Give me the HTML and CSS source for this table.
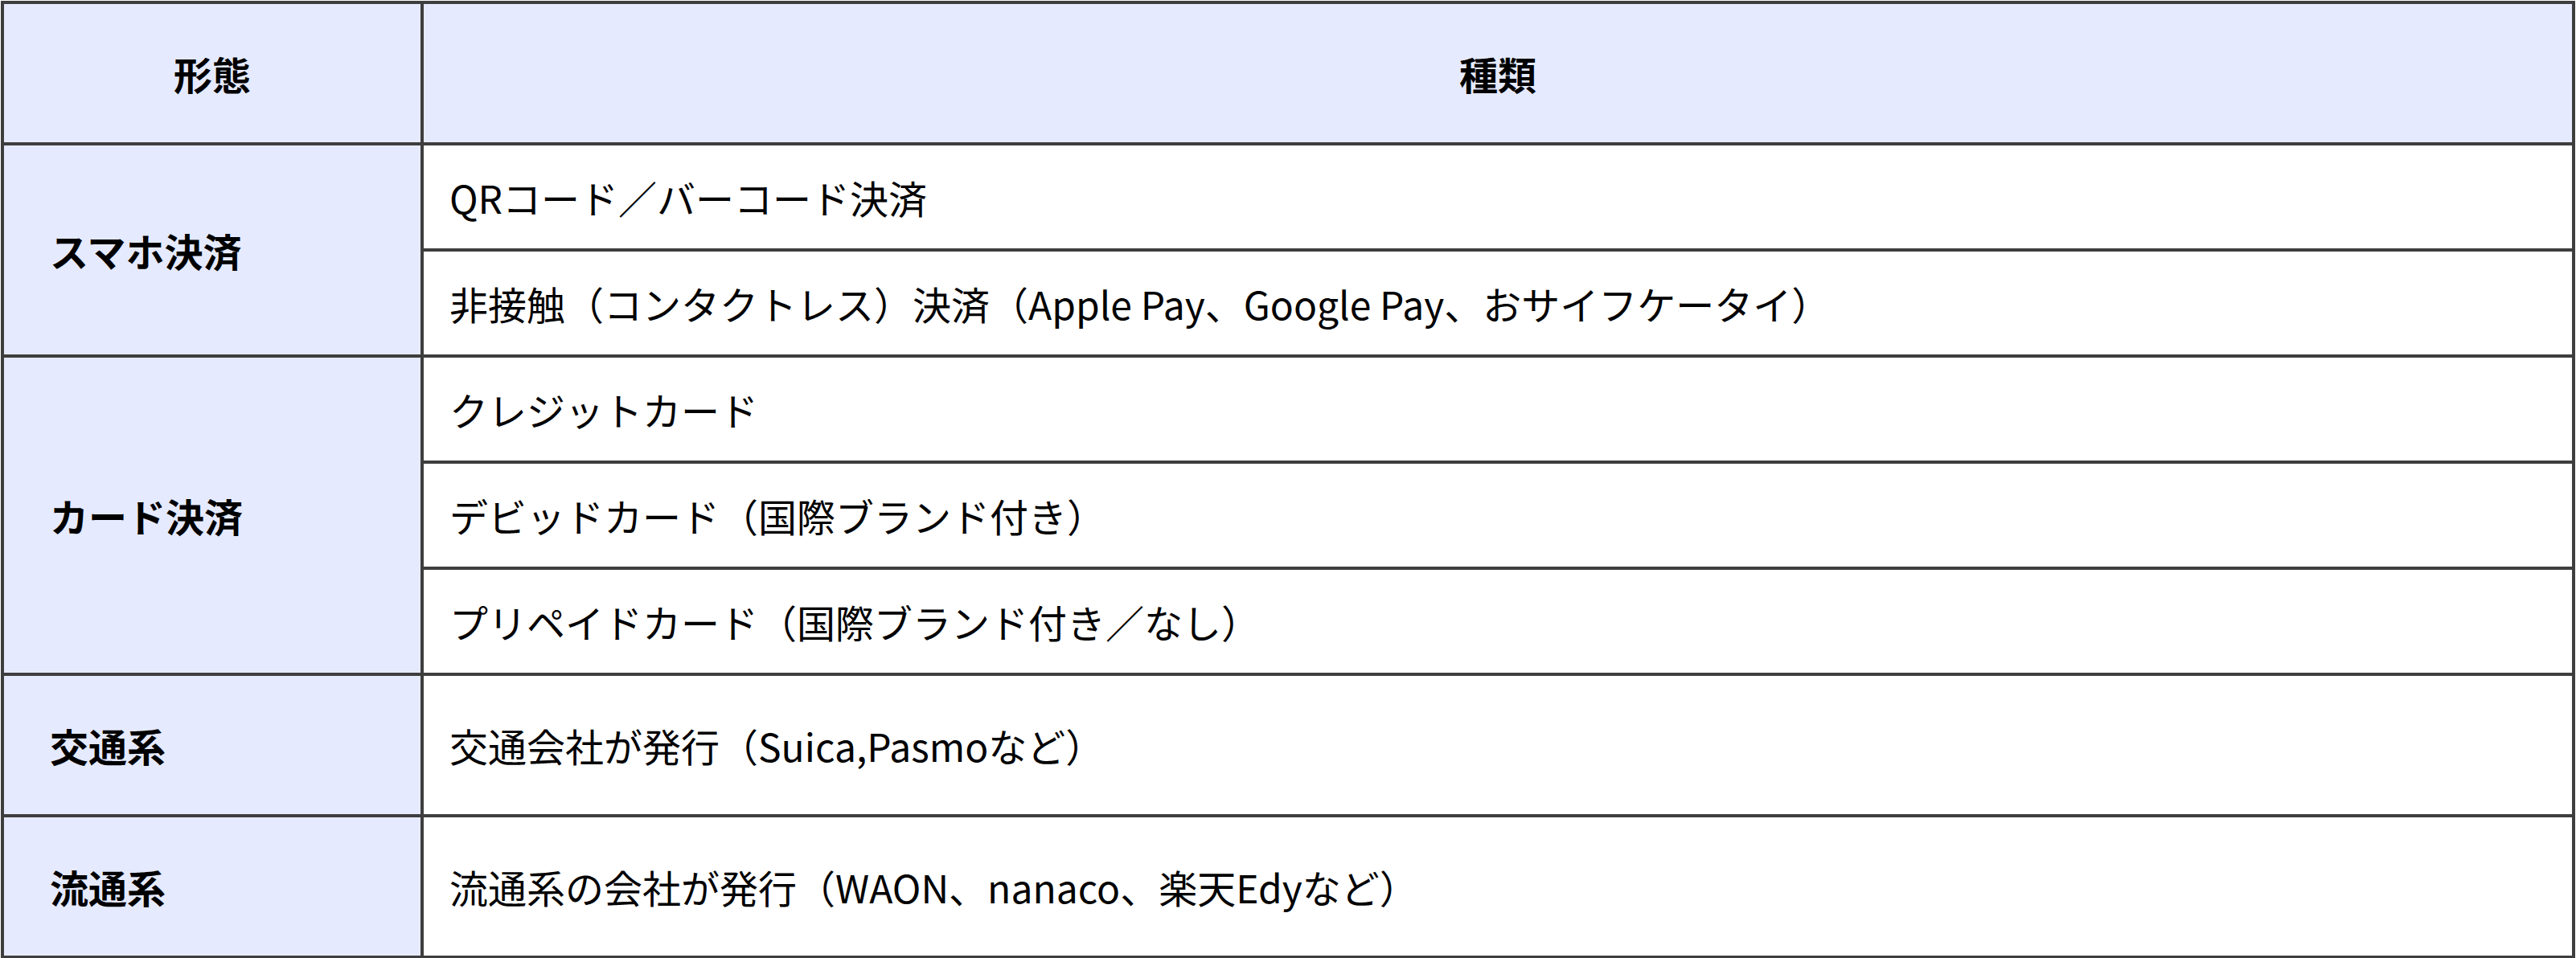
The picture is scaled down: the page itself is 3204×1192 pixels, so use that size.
FILE: index.html
```html
<!DOCTYPE html>
<html lang="ja">
<head>
  <meta charset="utf-8">
  <title>キャッシュレス決済の種類</title>
  <link rel="stylesheet" href="styles.css">
</head>
<body>
  <table class="pay-table">
    <colgroup>
      <col class="col-kind">
      <col class="col-type">
    </colgroup>
    <thead>
      <tr>
        <th>形態</th>
        <th>種類</th>
      </tr>
    </thead>
    <tbody>
      <tr>
        <th rowspan="2">スマホ決済</th>
        <td>QRコード／バーコード決済</td>
      </tr>
      <tr>
        <td>非接触（コンタクトレス）決済（Apple Pay、Google Pay、おサイフケータイ）</td>
      </tr>
      <tr>
        <th rowspan="3">カード決済</th>
        <td>クレジットカード</td>
      </tr>
      <tr>
        <td>デビッドカード（国際ブランド付き）</td>
      </tr>
      <tr>
        <td>プリペイドカード（国際ブランド付き／なし）</td>
      </tr>
      <tr>
        <th>交通系</th>
        <td>交通会社が発行（Suica,Pasmoなど）</td>
      </tr>
      <tr>
        <th>流通系</th>
        <td>流通系の会社が発行（WAON、nanaco、楽天Edyなど）</td>
      </tr>
    </tbody>
  </table>
</body>
</html>
```

FILE: styles.css
```css
html, body {
  margin: 0;
  padding: 0;
  background: #fff;
}
body {
  padding: 1px;
  font-family: "Noto Sans CJK JP", "Noto Sans", sans-serif;
  font-size: 48px;
  line-height: 72px;
  color: #000;
}
.pay-table {
  width: 3202px;
  border-collapse: collapse;
  table-layout: fixed;
}
.col-kind {
  width: 522px;
}
.pay-table th,
.pay-table td {
  border: 4px solid #3e3e3e;
  text-align: left;
  vertical-align: middle;
}
.pay-table th {
  background-color: #e5eaff;
  font-weight: 700;
  padding: 50px 57px;
}
.pay-table thead th {
  text-align: center;
  padding: 50px 30px;
}
.pay-table td {
  font-weight: 400;
  padding: 28px 32px;
}
```
